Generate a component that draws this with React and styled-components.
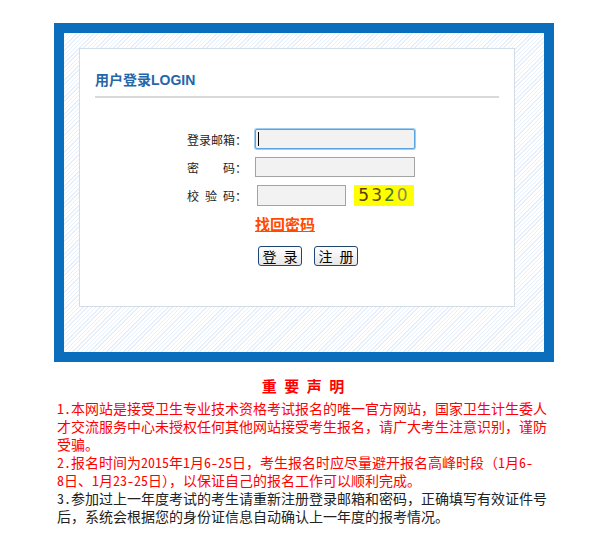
import styled, { createGlobalStyle } from 'styled-components';

const GlobalStyle = createGlobalStyle`
  body {
    margin: 0;
    background: #fff;
    font-family: "Noto Sans Mono CJK SC", "Noto Sans CJK SC", "Liberation Sans", sans-serif;
    font-size: 12px;
    color: #333;
  }
`;

const Page = styled.div`
  width: 500px;
  padding: 23px 0 0 54px;
`;

const BlueFrame = styled.div`
  border: 10px solid #0b6ebd;
  height: 319px;
  background: repeating-linear-gradient(135deg, #e7f0fa 0 1px, #fff 1px 3px);
`;

const Panel = styled.div`
  box-sizing: border-box;
  width: 436px;
  height: 259px;
  margin: 15px 0 0 15px;
  background: #fff;
  border: 1px solid #d3dde8;
  padding: 23px 15px 0 15px;
`;

const Title = styled.h2`
  margin: 0;
  font-family: "Liberation Sans", "Noto Sans CJK SC", sans-serif;
  font-size: 14px;
  line-height: 16px;
  font-weight: bold;
  color: #2566a8;
  padding-bottom: 8px;
  border-bottom: 2px solid #d9d9d9;
`;

const Form = styled.div`
  display: flex;
  flex-direction: column;
  gap: 8px;
  margin: 31px 0 0 92px;
`;

const Row = styled.div`
  display: flex;
  align-items: center;
  height: 20px;
`;

const Label = styled.div`
  display: flex;
  flex-shrink: 0;
  width: 60px;
  margin-right: 8px;
  font-size: 12px;
  color: #222;
  white-space: nowrap;
`;

const LabelText = styled.span`
  flex-shrink: 0;
  width: 48px;
  text-align: justify;
  text-align-last: justify;
`;

const InputBox = styled.div`
  position: relative;
  display: flex;
`;

const Input = styled.input`
  box-sizing: border-box;
  width: ${p => p.$w}px;
  height: ${p => p.$h || 20}px;
  margin-left: ${p => p.$ml || 0}px;
  padding: 0 2px;
  background: #f2f2f2;
  border: 1px solid ${p => (p.$focus ? '#5aa4e2' : '#a3a3a3')};
  box-shadow: ${p => (p.$focus ? '0 0 0 1px #9fcdf1' : 'none')};
  border-radius: ${p => (p.$focus ? '2px' : '0')};
  outline: none;
`;

const Caret = styled.span`
  position: absolute;
  left: 3px;
  top: 3px;
  width: 1px;
  height: 14px;
  background: #000;
`;

const Captcha = styled.div`
  width: 60px;
  height: 21px;
  margin-left: 8px;
  background: #ffff00;
  display: flex;
  align-items: center;
  justify-content: center;
  font-family: "DejaVu Sans", sans-serif;
  font-size: 17px;
  letter-spacing: 2px;
`;

const Digit = styled.span`
  color: ${p => p.$c};
`;

const ForgotLink = styled.a`
  margin-left: 68px;
  margin-top: 2px;
  font-size: 15px;
  font-weight: bold;
  color: #ff4a00;
  text-decoration: underline;
  line-height: 18px;
  cursor: pointer;
`;

const Buttons = styled.div`
  display: flex;
  gap: 12px;
  margin: 5px 0 0 71px;
`;

const Button = styled.button`
  box-sizing: border-box;
  width: 44px;
  height: 20px;
  padding: 0;
  font-family: inherit;
  font-size: 14px;
  line-height: 16px;
  color: #000;
  background: linear-gradient(#ffffff, #e6e6e6);
  border: 1px solid #1f4773;
  border-radius: 3px;
  cursor: pointer;
`;

const Notice = styled.div`
  width: 492px;
  padding: 14px 4px 0 3px;
  font-size: 14px;
  line-height: 18px;
`;

const NoticeTitle = styled.div`
  text-align: center;
  font-size: 15px;
  line-height: 20px;
  font-weight: bold;
  color: #ff0000;
  margin-bottom: 3px;
`;

const Item = styled.div`
  color: ${p => (p.$red ? '#ff0000' : '#222')};
`;

const NoBreak = styled.span`
  white-space: nowrap;
`;

const labels = ['登录邮箱', '密码', '校验码'];

const App = () => {
  return (
    <>
      <GlobalStyle />
      <Page>
        <BlueFrame>
          <Panel>
            <Title>用户登录LOGIN</Title>
            <Form>
              <Row>
                <Label><LabelText>{labels[0]}</LabelText>：</Label>
                <InputBox>
                  <Input $w={160} $focus />
                  <Caret />
                </InputBox>
              </Row>
              <Row>
                <Label><LabelText>{labels[1]}</LabelText>：</Label>
                <Input type='password' $w={160} />
              </Row>
              <Row>
                <Label><LabelText>{labels[2]}</LabelText>：</Label>
                <Input $w={89} $h={21} $ml={2} />
                <Captcha>
                  <Digit $c='#5b3a06'>5</Digit>
                  <Digit $c='#6b4a12'>3</Digit>
                  <Digit $c='#3f7a24'>2</Digit>
                  <Digit $c='#8c8a55'>0</Digit>
                </Captcha>
              </Row>
              <ForgotLink>找回密码</ForgotLink>
              <Buttons>
                <Button>登 录</Button>
                <Button>注 册</Button>
              </Buttons>
            </Form>
          </Panel>
        </BlueFrame>
        <Notice>
          <NoticeTitle>重 要 声 明</NoticeTitle>
          <Item $red>1.本网站是接受卫生专业技术资格考试报名的唯一官方网站，国家卫生计生委人才交流服务中心未授权任何其他网站接受考生报名，请广大考生注意识别，谨防受骗。</Item>
          <Item $red>2.报名时间为2015年1月6-25日，考生报名时应尽量避开报名高峰时段（1月6-<NoBreak>8日</NoBreak>、1月23-25日），以保证自己的报名工作可以顺利完成。</Item>
          <Item>3.参加过上一年度考试的考生请重新注册登录邮箱和密码，正确填写有效证件号后，系统会根据您的身份证信息自动确认上一年度的报考情况。</Item>
        </Notice>
      </Page>
    </>
  );
};

export default App;
